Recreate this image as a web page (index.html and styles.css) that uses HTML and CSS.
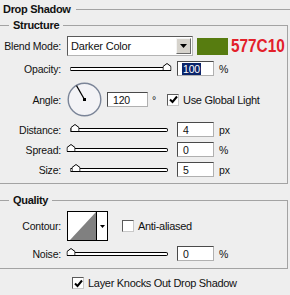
FILE: index.html
```html
<!DOCTYPE html>
<html lang="en">
<head>
    <meta charset="UTF-8">
    <title>Drop Shadow</title>
    <link rel="stylesheet" href="styles.css">
</head>
<body>
    <div class="title"><span>Drop Shadow</span><span class="rule"></span></div>

    <!-- Structure -->
    <fieldset class="group structure">
        <legend>Structure</legend>
        <div class="row blend">
            <span class="label">Blend Mode:</span>
            <div class="select">
                <span class="select-text">Darker Color</span>
                <span class="select-btn"><svg width="7" height="4" viewBox="0 0 7 4"><polygon points="0,0 7,0 3.5,4" fill="#000"/></svg></span>
            </div>
            <span class="swatch"></span>
            <span class="hex">577C10</span>
        </div>
        <div class="row">
            <span class="label">Opacity:</span>
            <div class="slider"><div class="track"><svg class="thumb" style="left:100%" width="9" height="8" viewBox="0 0 9 8"><polygon points="0.5,7.5 0.5,3.5 4.5,0.5 8.5,3.5 8.5,7.5" fill="#fff" stroke="#000"/></svg></div></div>
            <div class="field"><span class="selected">100</span></div>
            <span class="unit">%</span>
        </div>
        <div class="row angle">
            <span class="label">Angle:</span>
            <svg class="dial" width="35" height="35" viewBox="0 0 35 35">
                <circle cx="17.5" cy="17.5" r="16.3" fill="#f3f3f6" stroke="#7b8598" stroke-width="1.4"/>
                <line x1="17.5" y1="17.5" x2="9.5" y2="3.6" stroke="#000" stroke-width="1.2"/>
                <rect x="16" y="16" width="3" height="3" fill="#000"/>
            </svg>
            <div class="field angle-field">120</div>
            <span class="deg">°</span>
            <span class="check on"><svg width="9" height="9" viewBox="0 0 9 9"><polyline points="1,4.5 3.5,7 8,1.5" fill="none" stroke="#000" stroke-width="2"/></svg></span>
            <span class="check-text">Use Global Light</span>
        </div>
        <div class="row">
            <span class="label">Distance:</span>
            <div class="slider"><div class="track"><svg class="thumb" style="left:4%" width="9" height="8" viewBox="0 0 9 8"><polygon points="0.5,7.5 0.5,3.5 4.5,0.5 8.5,3.5 8.5,7.5" fill="#fff" stroke="#000"/></svg></div></div>
            <div class="field">4</div>
            <span class="unit">px</span>
        </div>
        <div class="row">
            <span class="label">Spread:</span>
            <div class="slider"><div class="track"><svg class="thumb" style="left:0%" width="9" height="8" viewBox="0 0 9 8"><polygon points="0.5,7.5 0.5,3.5 4.5,0.5 8.5,3.5 8.5,7.5" fill="#fff" stroke="#000"/></svg></div></div>
            <div class="field">0</div>
            <span class="unit">%</span>
        </div>
        <div class="row">
            <span class="label">Size:</span>
            <div class="slider"><div class="track"><svg class="thumb" style="left:5%" width="9" height="8" viewBox="0 0 9 8"><polygon points="0.5,7.5 0.5,3.5 4.5,0.5 8.5,3.5 8.5,7.5" fill="#fff" stroke="#000"/></svg></div></div>
            <div class="field">5</div>
            <span class="unit">px</span>
        </div>
    </fieldset>

    <!-- Quality -->
    <fieldset class="group quality">
        <legend>Quality</legend>
        <div class="row contour-row">
            <span class="label">Contour:</span>
            <div class="contour">
                <svg class="curve" width="28" height="28" viewBox="0 0 28 28"><polygon points="2,28 28,0 28,28" fill="#808080"/></svg>
                <span class="contour-btn"><svg width="5" height="3" viewBox="0 0 5 3"><polygon points="0,0 5,0 2.5,3" fill="#000"/></svg></span>
            </div>
            <span class="check anti"></span>
            <span class="check-text">Anti-aliased</span>
        </div>
        <div class="row">
            <span class="label">Noise:</span>
            <div class="slider"><div class="track"><svg class="thumb" style="left:0%" width="9" height="8" viewBox="0 0 9 8"><polygon points="0.5,7.5 0.5,3.5 4.5,0.5 8.5,3.5 8.5,7.5" fill="#fff" stroke="#000"/></svg></div></div>
            <div class="field">0</div>
            <span class="unit">%</span>
        </div>
    </fieldset>

    <div class="knockout">
        <span class="check on"><svg width="9" height="9" viewBox="0 0 9 9"><polyline points="1,4.5 3.5,7 8,1.5" fill="none" stroke="#000" stroke-width="2"/></svg></span>
        <span class="check-text">Layer Knocks Out Drop Shadow</span>
    </div>
</body>
</html>
```

FILE: styles.css
```css
/* Dialog */
body {
    margin: 0;
    width: 290px;
    height: 295px;
    overflow: hidden;
    background: #eeeeee;
    color: #111;
    font-family: "Liberation Sans", Arial, sans-serif;
    font-size: 10.5px;
    letter-spacing: -0.2px;
}

.title {
    display: flex;
    align-items: center;
    height: 14px;
    margin-top: 2px;
    padding-left: 3px;
    font-size: 11px;
    font-weight: bold;
    letter-spacing: -0.3px;
}

.title .rule {
    flex: 1;
    margin-left: 5px;
    border-top: 1px solid #a3a3a3;
}

/* Group boxes */
.group {
    margin: 3px 2px 0 -4px;
    padding: 5px 0 6px 0;
    border: 1px solid #a3a3a3;
    min-width: 0;
}

.group legend {
    margin-left: 12px;
    padding: 0 4px;
    font-size: 11px;
    line-height: 12px;
    font-weight: bold;
    letter-spacing: -0.3px;
}

.quality {
    margin-top: 10px;
    padding-bottom: 7px;
}

.row {
    display: flex;
    align-items: center;
    height: 15px;
    margin-top: 5px;
}

.row > * {
    flex-shrink: 0;
}

.row:first-of-type {
    margin-top: 0;
}

.label {
    flex: 0 0 64px;
    text-align: right;
}

/* Blend mode */
.blend {
    height: 20px;
}

.select {
    display: flex;
    align-items: center;
    width: 122px;
    height: 16px;
    margin-left: 6px;
    padding: 1px;
    background: #fff;
    border: 1px solid;
    border-color: #5a5a5a #b4b4b4 #b4b4b4 #5a5a5a;
}

.select-text {
    flex: 1;
    padding-left: 2px;
    font-size: 11px;
}

.select-btn {
    display: flex;
    align-items: center;
    justify-content: center;
    width: 13px;
    height: 14px;
    background: #d6d3cc;
    border: 1px solid;
    border-color: #f4f4f4 #6b6b6b #6b6b6b #f4f4f4;
}

.swatch {
    width: 31px;
    height: 17px;
    margin-left: 4px;
    background: #577c10;
}

.hex {
    width: 56px;
    margin-left: 3px;
    white-space: nowrap;
    font-size: 18.5px;
    font-weight: bold;
    letter-spacing: 0;
    color: #e3202a;
    transform: scaleX(0.83);
    transform-origin: left center;
}

/* Sliders */
.slider {
    display: flex;
    align-items: center;
    width: 98px;
    height: 15px;
    margin-left: 5px;
    padding: 0 4px;
}

.track {
    position: relative;
    flex: 1;
    height: 2px;
    background: #fff;
    border: 1px solid #000;
    border-left-color: #666;
    border-radius: 0 2px 2px 0;
}

.thumb {
    position: absolute;
    bottom: -1px;
    transform: translateX(-50%);
}

/* Number fields */
.field {
    box-sizing: border-box;
    width: 37px;
    height: 15px;
    margin-left: 5px;
    padding: 1px 0 0 5px;
    background: #fff;
    border: 1px solid;
    border-color: #4a4a4a #b0b0b0 #b0b0b0 #4a4a4a;
    line-height: 12px;
}

.selected {
    display: inline-block;
    padding: 0 1px;
    margin-left: -1px;
    background: #0a246a;
    color: #fff;
}

.unit {
    margin-left: 5px;
}

/* Angle */
.angle {
    height: 35px;
    margin-top: 6px;
}

.dial {
    margin-left: 6px;
}

.angle-field {
    width: 41px;
    margin-left: 5px;
}

.deg {
    margin-left: 4px;
}

.check {
    display: flex;
    align-items: center;
    justify-content: center;
    box-sizing: border-box;
    width: 12px;
    height: 12px;
    margin-left: 11px;
    background: #fff;
    border: 1px solid;
    border-color: #5a5a5a #c8c8c8 #c8c8c8 #5a5a5a;
}

.check-text {
    margin-left: 4px;
    font-size: 11px;
    letter-spacing: -0.3px;
}

/* Quality */
.contour-row {
    height: 30px;
}

.contour {
    display: flex;
    height: 30px;
    margin-left: 6px;
}

.curve {
    background: #fff;
    border: 1px solid #000;
}

.contour-btn {
    display: flex;
    align-items: center;
    justify-content: center;
    width: 10px;
    height: 28px;
    background: #fff;
    border: 1px solid #000;
    border-left: none;
}

.anti {
    margin-left: 14px;
}

.knockout {
    display: flex;
    align-items: center;
    height: 12px;
    margin-top: 8px;
    padding-left: 72px;
}

.knockout .check {
    margin-left: 0;
}
```
